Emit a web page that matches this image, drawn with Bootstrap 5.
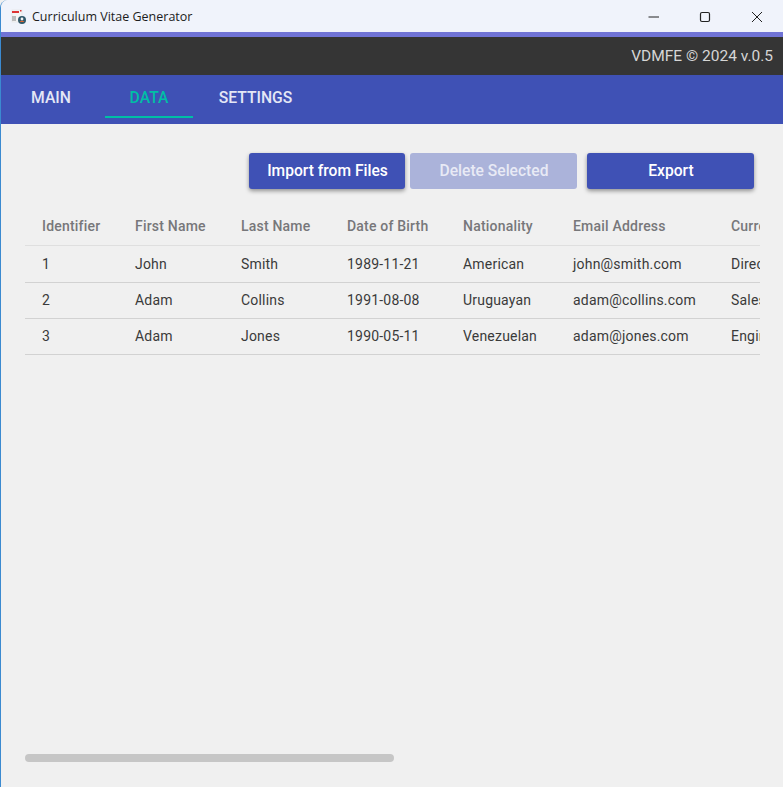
<!DOCTYPE html>
<html lang="en">
<head>
<meta charset="utf-8">
<title>Curriculum Vitae Generator</title>
<link href="https://cdn.jsdelivr.net/npm/bootstrap@5.3.0/dist/css/bootstrap.min.css" rel="stylesheet">
<style>
html,body{height:100%;margin:0;overflow:hidden;background:#f0f0f0;font-family:Roboto,"Liberation Sans",sans-serif}
.win{height:787px;width:783px;display:flex;flex-direction:column;border-left:1px solid #3b8ad0;border-top-left-radius:8px;overflow:hidden}
.titlebar{height:32px;background:#f0f3fb;flex:none;padding:2px 0 0 10px}
.titletext{font-family:"Segoe UI","Open Sans","Noto Sans",sans-serif;font-size:12.5px;color:#1c1c1c;margin-left:5px}
.winbtn{width:52px;height:30px;display:flex;align-items:center;justify-content:center}
.winbtn-min{width:50px}
.accent{height:5px;background:#7073d6;flex:none}
.statusbar{height:38px;background:#353535;color:#d6d6d6;font-size:15.5px;flex:none;padding:2px 10px 0 0}
.tabbar{height:49px;background:#3f51b5;flex:none}
.tabitem{height:43px;padding-top:5px;display:flex;align-items:center;justify-content:center;font-size:15.7px;font-weight:500;color:#e4e7f6;text-transform:uppercase;border-bottom:2px solid transparent;text-decoration:none}
.tab-a{width:100px}
.tab-b{width:88px;margin-left:4px;color:#00bfa5;border-bottom-color:#00bfa5}
.tab-c{width:125px}
.pagebody{flex:1 1 auto;min-height:0;background:#f0f0f0;padding:29px 0 0 24px;display:flex;flex-direction:column}
.btnrow{padding-right:29px;gap:5px}
.actbtn{height:36px;border:0;border-radius:3px;background:#3f51b5;color:#fff;font-size:15.6px;font-weight:500;padding:2px 0 0 1px;box-shadow:0 2px 4px rgba(0,0,0,.4)}
.btn-import{width:156px}
.btn-delete{width:167px;background:#abb3da;color:#e8eaf5;box-shadow:none}
.btn-export{width:167px;margin-left:5px}
.tablewrap{position:relative;width:735px;height:558px;margin-top:18px;background:#f0f0f0;overflow:hidden}
.datatable{table-layout:fixed;width:1464px;border-collapse:collapse;margin:0;font-size:14px}
.datatable th,.datatable td{background:transparent;padding:0 0 0 17px;white-space:nowrap;overflow:hidden;letter-spacing:.2px;box-shadow:none;vertical-align:middle}
.datatable th{height:38px;padding-top:2px;color:#77777a;font-weight:500;border-bottom:1px solid #dfdfdf}
.datatable td{height:36px;color:#3a3a3a;font-weight:400;border-bottom:1px solid #d2d2d2}
.datatable tbody tr:first-child td{height:37px;padding-top:2px}
.thumb{position:absolute;left:0;top:547px;width:369px;height:8px;border-radius:4px;background:#c6c6c6}
</style>
</head>
<body>
<div class="win">
  <div class="titlebar d-flex align-items-center">
    <svg width="16" height="16" viewBox="0 0 16 16" aria-hidden="true"><rect x="1" y="1" width="10" height="12" fill="#f5f5f5" stroke="#ddd" stroke-width=".5"/><rect x="1" y="2" width="7" height="2" fill="#d33"/><rect x="9" y="1" width="1.5" height="1.5" fill="#d33"/><rect x="1" y="7" width="4" height="5" fill="#bbb"/><circle cx="11" cy="11" r="4" fill="#31596b"/><circle cx="11" cy="10" r="1.4" fill="#f3f3f3"/><path d="M8.6 13a2.6 2 0 0 1 4.8 0z" fill="#e0662f"/></svg>
    <span class="titletext">Curriculum Vitae Generator</span>
    <div class="d-flex ms-auto">
      <div class="winbtn winbtn-min"><svg width="12" height="12" viewBox="0 0 12 12"><path d="M.5 6h10.500" stroke="#222" fill="none"/></svg></div>
      <div class="winbtn"><svg width="12" height="12" viewBox="0 0 12 12"><rect x="1.500" y="1.500" width="9" height="9" rx="1.500" stroke="#222" stroke-width="1.200" fill="none"/></svg></div>
      <div class="winbtn"><svg width="12" height="12" viewBox="0 0 12 12"><path d="M1 1l10 10M11 1L1 11" stroke="#222" fill="none"/></svg></div>
    </div>
  </div>
  <div class="accent"></div>
  <div class="statusbar d-flex align-items-center justify-content-end">VDMFE © 2024 v.0.5</div>
  <nav class="tabbar d-flex">
    <a class="tabitem tab-a" href="#">Main</a>
    <a class="tabitem tab-b" href="#">Data</a>
    <a class="tabitem tab-c" href="#">Settings</a>
  </nav>
  <main class="pagebody">
    <div class="d-flex justify-content-end btnrow">
      <button class="actbtn btn-import" type="button">Import from Files</button>
      <button class="actbtn btn-delete" type="button">Delete Selected</button>
      <button class="actbtn btn-export" type="button">Export</button>
    </div>
    <div class="tablewrap">
      <table class="table datatable">
        <colgroup><col style="width:93px"><col style="width:106px"><col style="width:106px"><col style="width:116px"><col style="width:110px"><col style="width:158px"><col style="width:775px"></colgroup>
        <thead><tr><th>Identifier</th><th>First Name</th><th>Last Name</th><th>Date of Birth</th><th>Nationality</th><th>Email Address</th><th>Current Position</th></tr></thead>
        <tbody>
          <tr><td>1</td><td>John</td><td>Smith</td><td>1989-11-21</td><td>American</td><td>john@smith.com</td><td>Director</td></tr>
          <tr><td>2</td><td>Adam</td><td>Collins</td><td>1991-08-08</td><td>Uruguayan</td><td>adam@collins.com</td><td>Sales</td></tr>
          <tr><td>3</td><td>Adam</td><td>Jones</td><td>1990-05-11</td><td>Venezuelan</td><td>adam@jones.com</td><td>Engineer</td></tr>
        </tbody>
      </table>
      <div class="thumb"></div>
    </div>
  </main>
</div>
<script src="https://cdn.jsdelivr.net/npm/bootstrap@5.3.0/dist/js/bootstrap.bundle.min.js"></script>
</body>
</html>
